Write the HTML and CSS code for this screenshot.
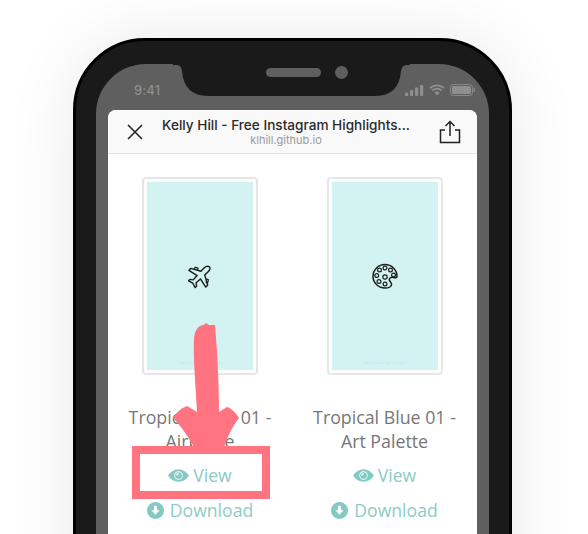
FILE: index.html
```html
<!DOCTYPE html>
<html lang="en">
<head>
<meta charset="utf-8">
<title>Kelly Hill - Free Instagram Highlights</title>
<link rel="stylesheet" href="styles.css">
</head>
<body>
<div class="stage">
  <div class="phone">
    <div class="screen">
      <div class="status">
        <span class="time">9:41</span>
        <div class="status-icons">
          <svg class="sig" width="19" height="11" viewBox="0 0 19 11"><rect x="0" y="7.5" width="3.2" height="3.5" rx=".8"/><rect x="5" y="5" width="3.2" height="6" rx=".8"/><rect x="10" y="2.5" width="3.2" height="8.5" rx=".8"/><rect x="15" y="0" width="3.2" height="11" rx=".8"/></svg>
          <svg class="wifi" width="16" height="12" viewBox="0 0 16 12"><path d="M1 4.2a10 10 0 0 1 14 0M3.3 6.6a6.7 6.7 0 0 1 9.4 0" fill="none" stroke="#8f8f8f" stroke-width="1.8"/><path d="M5.4 8.5a3.7 3.7 0 0 1 5.2 0L8 11.5z" fill="#8f8f8f"/></svg>
          <svg class="batt" width="25" height="12" viewBox="0 0 25 12"><rect x=".5" y=".5" width="22" height="11" rx="3" fill="none" stroke="#8a8a8a"/><rect x="2" y="2" width="19" height="8" rx="1.6" fill="#8f8f8f"/><rect x="23.5" y="4" width="1.3" height="4" rx=".6" fill="#8a8a8a"/></svg>
        </div>
      </div>
      <div class="sheet">
        <header class="bar">
          <svg class="bar-close" width="16" height="16" viewBox="0 0 16 16"><path d="M1 1l14 14M15 1L1 15" fill="none" stroke="#222" stroke-width="1.5"/></svg>
          <div class="bar-text">
            <div class="bar-title">Kelly Hill - Free Instagram Highlights...</div>
            <div class="bar-url">klhill.github.io</div>
          </div>
          <svg class="bar-share" width="22" height="24" viewBox="0 0 22 24"><path d="M11 16V2M6.500 6L11 1.500 15.500 6M6 10H1.500V22.500H20.500V10H16" fill="none" stroke="#222" stroke-width="1.5"/></svg>
        </header>
        <div class="grid">
          <article class="item">
            <div class="thumb">
              <div class="art">
                <svg class="art-icon plane" width="23" height="24" viewBox="0 0 24 24"><path d="M22.500 1.500c-1.500-1.200-4-.6-5.500.8L13.500 6 3 3 1 5l8.500 5.500-4 4.500-3.500-.5L.5 16l4.500 2.500L7.500 23l1.500-1.500-.5-3.500 4.500-4 5.500 8.500 2-2-3-10.500 3.500-3.500c1.500-1.500 2.500-4 1.500-5z" fill="none" stroke="#1e1e1e" stroke-width="1.500" stroke-linejoin="round"/><path d="M6.500 4l1-2.200 3 1L9.800 5M19 14l2.300 1-.8 3-2-.5" fill="none" stroke="#1e1e1e" stroke-width="1.300"/></svg>
                <span class="art-note">also Theme by Hollygirl</span>
              </div>
            </div>
            <h2 class="name">Tropical Blue 01 - Airplane</h2>
            <a class="link"><svg class="eye" width="21" height="13" viewBox="0 0 20 12"><path d="M0 6c2.500-3.800 6-6 10-6s7.500 2.200 10 6c-2.500 3.800-6 6-10 6S2.500 9.800 0 6z" fill="#84cac4"/><circle cx="10" cy="6" r="4" fill="#fff"/><circle cx="10" cy="6" r="3.200" fill="#84cac4"/><circle cx="9" cy="5" r="1.100" fill="#fff"/></svg>View</a>
            <a class="link"><svg class="dl" width="17" height="17" viewBox="0 0 17 17"><circle cx="8.500" cy="8.500" r="8.500" fill="#84cac4"/><path d="M7 3.800h3v4.400h2.600l-4.100 4.500-4.100-4.500H7z" fill="#fff"/></svg>Download</a>
          </article>
          <article class="item">
            <div class="thumb">
              <div class="art">
                <svg class="art-icon" width="26" height="26" viewBox="0 0 26 26"><path d="M25 13.500c0-6.800-5.400-12-12-12S1 6.800 1 13.300 6.300 25 12.800 25c3.300 0 6.500-1.300 6.800-3.500.2-2-2.500-3-2.300-5 .2-1.800 2.300-2.400 3.900-2.100 1.400.3 3.800.9 3.800-.9z" fill="none" stroke="#1e1e1e" stroke-width="1.500"/><g fill="none" stroke="#1e1e1e" stroke-width="1.200"><circle cx="7.500" cy="7" r="1.900"/><circle cx="13" cy="5" r="1.900"/><circle cx="18.500" cy="7" r="1.900"/><circle cx="21.500" cy="12" r="1.900"/><circle cx="4.700" cy="12.500" r="1.900"/><circle cx="7" cy="18.500" r="1.900"/><circle cx="13" cy="14" r="2.200"/><circle cx="13" cy="21" r="1.900"/></g></svg>
                <span class="art-note">also Theme by Hollygirl</span>
              </div>
            </div>
            <h2 class="name">Tropical Blue 01 - Art Palette</h2>
            <a class="link"><svg class="eye" width="21" height="13" viewBox="0 0 20 12"><path d="M0 6c2.500-3.800 6-6 10-6s7.500 2.200 10 6c-2.500 3.800-6 6-10 6S2.500 9.800 0 6z" fill="#84cac4"/><circle cx="10" cy="6" r="4" fill="#fff"/><circle cx="10" cy="6" r="3.200" fill="#84cac4"/><circle cx="9" cy="5" r="1.100" fill="#fff"/></svg>View</a>
            <a class="link"><svg class="dl" width="17" height="17" viewBox="0 0 17 17"><circle cx="8.500" cy="8.500" r="8.500" fill="#84cac4"/><path d="M7 3.800h3v4.400h2.600l-4.100 4.500-4.100-4.500H7z" fill="#fff"/></svg>Download</a>
          </article>
        </div>
      </div>
    </div>
    <svg class="notch" width="237" height="36" viewBox="0 0 237 36"><path d="M0 0V4H4Q8 4 9 10Q11 35 35 35H202Q226 35 228 10Q229 4 233 4H237V0Z" fill="#1a1a1a"/></svg>
    <div class="speaker"></div>
    <div class="camera"></div>
  </div>
  <svg class="arrow" width="140" height="180" viewBox="0 0 140 180"><path d="M65 20C68 15 72 17 74 14L77 16 83 16C85 40 87 70 87 103L95 98C99 99 104 104 107 109 100 118 95 128 91 142H64C58 130 50 118 41 109 44 104 49 99 55 97L65 103C64 80 61 50 62 30 62 26 63 23 65 20Z" fill="#ff7480"/></svg>
  <div class="highlight"></div>
</div>
</body>
</html>
```

FILE: styles.css
```css
* { box-sizing: border-box; }
html, body { margin: 0; height: 534px; overflow: hidden; background: #fff; }
.stage { position: relative; width: 588px; height: 534px; overflow: hidden; padding: 38px 0 0 73px; }
.phone {
  position: relative;
  width: 439px;
  height: 620px;
  padding: 23px 20px 0;
  background: #1a1a1a;
  border: 3px solid #000;
  border-radius: 72px;
  box-shadow: 0 0 70px rgba(0, 0, 0, .09);
}
.screen { height: 600px; padding: 0 12px; background: #5f5f5f; border-radius: 50px 50px 0 0; }
.status { height: 46px; display: flex; justify-content: space-between; align-items: flex-start; padding: 18px 2px 0 26px; }
.time { font: 500 13px/16px Inter, sans-serif; color: #8f8f8f; letter-spacing: .1px; }
.status-icons { display: flex; align-items: center; gap: 5px; padding-top: 2px; }
.sig { fill: #8f8f8f; }
.sheet { background: #fff; border-radius: 8px 8px 0 0; height: 500px; }
.bar { height: 44px; display: flex; align-items: center; padding: 0 16px 0 19px; background: #f9f9f9; border-bottom: 1px solid #e6e6e6; border-radius: 8px 8px 0 0; }
.bar-close { flex: none; }
.bar-text { flex: 1; min-width: 0; text-align: center; padding-left: 6px; }
.bar-title { font: 500 13.6px/17px Inter, sans-serif; color: #2a2a2a; white-space: nowrap; }
.bar-url { font: 400 11px/13px Inter, sans-serif; color: #9a9a9a; }
.bar-share { flex: none; margin-left: 16px; }
.grid { display: grid; grid-template-columns: 184px 185px; padding-top: 23px; }
.item { display: flex; flex-direction: column; align-items: center; text-align: center; }
.thumb { width: 116px; height: 198px; padding: 3px; border: 2px solid #e6e6e6; border-radius: 4px; background: #fff; }
.art { height: 100%; position: relative; display: flex; align-items: center; justify-content: center; background: #d3f2f2; }
.art-icon { display: block; }
.plane { margin: 2px 2px 0 0; }
.art-note { position: absolute; left: 0; right: 0; bottom: 4px; font: 4px/6px "Open Sans", sans-serif; color: #bfe9e7; white-space: nowrap; }
.name { margin: 30px 0 0; width: 170px; font: 400 17.8px/24px "Open Sans", sans-serif; color: #777; }
.link { display: flex; align-items: center; gap: 4px; height: 25px; margin-top: 10px; font: 400 17.6px/25px "Open Sans", sans-serif; color: #8ccbc7; }
.dl { margin-right: 2px; }
.notch { position: absolute; left: 97px; top: 20px; }
.speaker { position: absolute; left: 190px; top: 27px; width: 55px; height: 9px; border-radius: 5px; background: #5f5f5f; }
.camera { position: absolute; left: 259px; top: 25px; width: 13px; height: 13px; border-radius: 50%; background: #5f5f5f; }
.arrow { position: absolute; left: 132px; top: 309px; }
.highlight { position: absolute; left: 132px; top: 446px; width: 138px; height: 53px; border: 8px solid #ff7480; }
```
